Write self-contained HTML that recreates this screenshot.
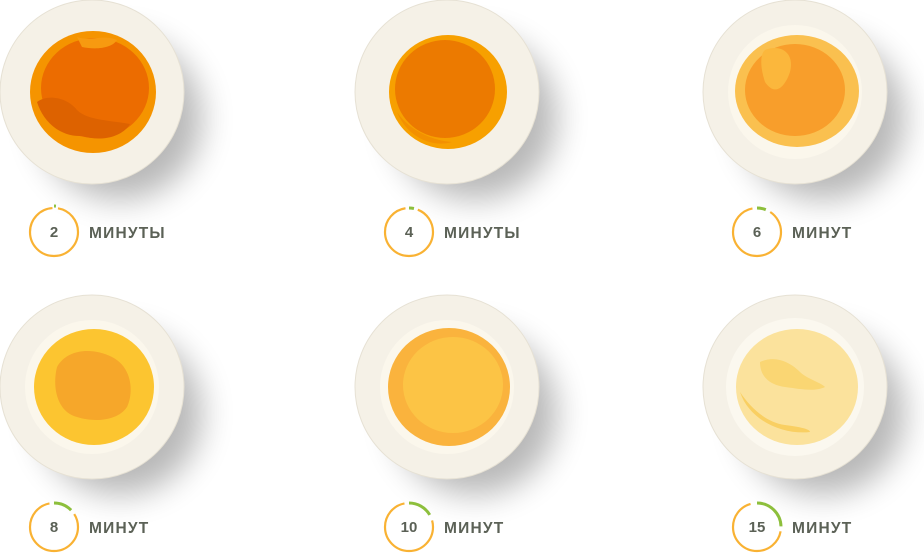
<!DOCTYPE html>
<html><head><meta charset="utf-8"><style>
body{margin:0;background:#fff;width:924px;height:555px;overflow:hidden;font-family:"Liberation Sans",sans-serif}
svg{position:absolute;left:0;top:0}
</style></head><body>
<svg width="924" height="555" viewBox="0 0 924 555">
<defs>
<filter id="b" x="-50%" y="-50%" width="200%" height="200%"><feGaussianBlur stdDeviation="16"/></filter>
<g id="white">
<circle r="92" fill="#f5f1e7" stroke="#e6e1d4" stroke-width="1"/>
</g>
</defs>
<g fill="#000" opacity="0.28" filter="url(#b)">
<circle cx="120" cy="118" r="82"/><circle cx="475" cy="118" r="82"/><circle cx="823" cy="118" r="82"/>
<circle cx="120" cy="413" r="82"/><circle cx="475" cy="413" r="82"/><circle cx="823" cy="413" r="82"/>
</g>
<!-- egg 1 -->
<g transform="translate(92,92)">
<use href="#white"/>
<ellipse cx="1" cy="0" rx="63" ry="61" fill="#f59400"/>
<ellipse cx="3" cy="-4" rx="54" ry="50" fill="#ec6c00"/>
<path d="M-55,10 C-45,2 -25,5 -15,18 C-5,28 15,28 38,32 C30,45 10,50 -10,44 C-30,45 -48,32 -55,10Z" fill="#dd6200"/>
<path d="M-15,-55 C0,-50 10,-58 25,-52 C20,-44 5,-42 -10,-45Z" fill="#f79a10"/>
</g>
<!-- egg 2 -->
<g transform="translate(447,92)">
<use href="#white"/>
<ellipse cx="1" cy="0" rx="59" ry="57" fill="#f7a000"/>
<ellipse cx="-2" cy="-3" rx="50" ry="49" fill="#ec7a00"/>
<path d="M-50,20 C-40,35 -20,48 5,50 C-15,56 -40,45 -50,20Z" fill="#f39000"/>
</g>
<!-- egg 3 -->
<g transform="translate(795,92)">
<use href="#white"/>
<circle r="67" fill="#fbf7ec"/>
<ellipse cx="2" cy="-1" rx="62" ry="56" fill="#fac04f"/>
<ellipse cx="0" cy="-2" rx="50" ry="46" fill="#f89e2b"/>
<path d="M-30,-42 C-15,-48 0,-40 -5,-20 C-10,-5 -20,5 -30,-10 C-35,-25 -35,-38 -30,-42Z" fill="#fbb73c"/>
</g>
<!-- egg 4 -->
<g transform="translate(92,387)">
<use href="#white"/>
<circle r="67" fill="#fbf7ec"/>
<ellipse cx="2" cy="0" rx="60" ry="58" fill="#fcc530"/>
<path d="M-35,-20 C-25,-38 0,-40 20,-30 C40,-20 42,5 35,20 C25,35 0,35 -15,30 C-35,25 -40,0 -35,-20Z" fill="#f6a72a"/>
</g>
<!-- egg 5 -->
<g transform="translate(447,387)">
<use href="#white"/>
<circle r="67" fill="#fbf7ec"/>
<ellipse cx="2" cy="0" rx="61" ry="59" fill="#fab33d"/>
<ellipse cx="6" cy="-2" rx="50" ry="48" fill="#fcc445"/>
</g>
<!-- egg 6 -->
<g transform="translate(795,387)">
<use href="#white"/>
<circle r="69" fill="#fbf8ef"/>
<ellipse cx="2" cy="0" rx="61" ry="58" fill="#fbe29c"/>
<path d="M-35,-25 C-20,-32 -5,-25 5,-15 C12,-8 25,-5 30,0 C20,5 5,2 -10,0 C-25,-2 -35,-10 -35,-25Z" fill="#fad673"/>
<path d="M-55,5 C-45,20 -30,35 -10,38 C5,40 15,42 15,45 C-10,48 -45,35 -55,5Z" fill="#f9cf62"/>
</g>
<g fill="none" stroke-width="2.2">
<g transform="translate(54,232) rotate(-90)">
<circle r="24" stroke="#f9b233" stroke-dasharray="145 151" stroke-dashoffset="-4"/>
<circle r="26" stroke="#8dbf3c" stroke-width="3" stroke-dasharray="3 170" stroke-dashoffset="1"/>
</g>
<g transform="translate(409,232) rotate(-90)">
<circle r="24" stroke="#f9b233" stroke-dasharray="138 151" stroke-dashoffset="-9"/>
<circle r="24" stroke="#8dbf3c" stroke-width="3" stroke-dasharray="5 151"/>
</g>
<g transform="translate(757,232) rotate(-90)">
<circle r="24" stroke="#f9b233" stroke-dasharray="132 151" stroke-dashoffset="-14"/>
<circle r="24" stroke="#8dbf3c" stroke-width="3" stroke-dasharray="9 151"/>
</g>
<g transform="translate(54,527) rotate(-90)">
<circle r="24" stroke="#f9b233" stroke-dasharray="122 151" stroke-dashoffset="-24"/>
<circle r="24" stroke="#8dbf3c" stroke-width="3" stroke-dasharray="19 151"/>
</g>
<g transform="translate(409,527) rotate(-90)">
<circle r="24" stroke="#f9b233" stroke-dasharray="115 151" stroke-dashoffset="-31"/>
<circle r="24" stroke="#8dbf3c" stroke-width="3" stroke-dasharray="25 151"/>
</g>
<g transform="translate(757,527) rotate(-90)">
<circle r="24" stroke="#f9b233" stroke-dasharray="102 151" stroke-dashoffset="-42"/>
<circle r="24" stroke="#8dbf3c" stroke-width="3" stroke-dasharray="37 151"/>
</g>
</g>
<g font-family="Liberation Sans, sans-serif" font-weight="bold" fill="#5b6156" font-size="15">
<g text-anchor="middle">
<text x="54" y="237">2</text><text x="409" y="237">4</text><text x="757" y="237">6</text>
<text x="54" y="532">8</text><text x="409" y="532">10</text><text x="757" y="532">15</text>
</g>
<g letter-spacing="1.2" font-size="15.5">
<text x="89" y="238">МИНУТЫ</text><text x="444" y="238">МИНУТЫ</text><text x="792" y="238">МИНУТ</text>
<text x="89" y="533">МИНУТ</text><text x="444" y="533">МИНУТ</text><text x="792" y="533">МИНУТ</text>
</g>
</g>
</svg>
</body></html>
